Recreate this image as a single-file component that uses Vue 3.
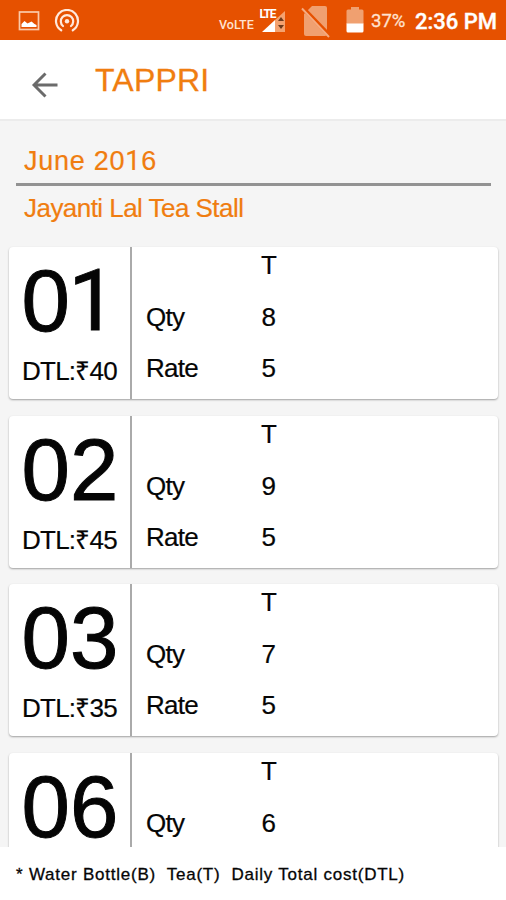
<script setup>
import { ref } from 'vue';

const entries = ref([
    { day: '01', total: 40, qty: 8, rate: 5 },
    { day: '02', total: 45, qty: 9, rate: 5 },
    { day: '03', total: 35, qty: 7, rate: 5 },
    { day: '06', total: 30, qty: 6, rate: 5 },
]);
</script>

<template>
    <div class="screen">
        <!-- Status bar -->
        <div class="status-bar">
            <svg class="icon-image" width="22" height="22" viewBox="0 0 22 22">
                <rect x="1.5" y="2" width="19" height="17.5" fill="none" stroke="#fbc9a8" stroke-width="1.7" />
                <path d="M3.500 17v-3l3-3 3 2.500 4-2 3 2.500 2 1v2z" fill="#fff" />
            </svg>
            <svg class="icon-cast" width="26" height="24" viewBox="0 0 26 24" fill="none" stroke="#ffe9dc"
                stroke-width="2.2" stroke-linecap="round">
                <path d="M7.2 21.3A11 11 0 1 1 18.8 21.3" />
                <path d="M9 17A6.2 6.2 0 1 1 17 17" />
                <circle cx="13" cy="12.3" r="2.2" fill="#ffe9dc" stroke="none" />
            </svg>
            <span class="volte">VoLTE</span>
            <div class="signal">
                <span class="lte">LTE</span>
                <svg width="26" height="24" viewBox="0 0 26 24">
                    <path d="M24 1v21H14V10z" fill="#f4a26f" />
                    <path d="M1 22 14 10v12z" fill="#fff" />
                    <path d="M17 11l3-4 3 4zM17 15l3 4 3-4z" fill="#6b3a1c" />
                </svg>
            </div>
            <svg class="icon-sim" width="32" height="34" viewBox="0 0 32 34">
                <path d="M11 2h13q2 0 2 2v26q0 2-2 2H5q-2 0-2-2V10z" fill="#f0a070" />
                <path d="M2 4 29 32" stroke="#e65100" stroke-width="4" />
                <path d="M1 4.5 28 33" stroke="#f5ab80" stroke-width="1.9" />
            </svg>
            <svg class="icon-battery" width="18" height="26" viewBox="0 0 18 26">
                <path d="M5 0h8v2.5h3q1.5 0 1.5 1.5V17H.5V4Q.5 2.5 2 2.5h3z" fill="#f0a070" />
                <path d="M.5 16.5h17V24q0 1.5-1.5 1.5H2Q.5 25.5.5 24z" fill="#fff" />
            </svg>
            <span class="percent">37%</span>
            <span class="clock">2:36 PM</span>
        </div>

        <!-- Toolbar -->
        <header class="toolbar">
            <svg class="back" width="28" height="28" viewBox="0 0 28 28" fill="none" stroke="#6b6b6b"
                stroke-width="2.9">
                <path d="M26.5 14H3M14.5 2.5 3 14l11.5 11.5" />
            </svg>
            <h1>TAPPRI</h1>
        </header>

        <main class="content">
            <div class="month">June 20<span class="one">1</span>6</div>
            <div class="shop">Jayanti Lal Tea Stall</div>

            <div class="list">
                <div v-for="entry in entries" :key="entry.day" class="card">
                    <div class="date">
                        <div class="day">
                            <span v-for="(digit, i) in entry.day" :key="i" :class="{ one: digit === '1' }">{{ digit }}</span>
                        </div>
                        <div class="dtl">DTL:₹{{ entry.total }}</div>
                    </div>
                    <div class="details">
                        <span></span><span class="value">T</span>
                        <span>Qty</span><span class="value">{{ entry.qty }}</span>
                        <span>Rate</span><span class="value">{{ entry.rate }}</span>
                    </div>
                </div>
            </div>
        </main>

        <footer class="legend">* Water Bottle(B)&nbsp; Tea(T)&nbsp; Daily Total cost(DTL)</footer>
    </div>
</template>

<style>
body {
    margin: 0;
    overflow: hidden;
}
</style>

<style scoped>
.screen {
    display: flex;
    flex-direction: column;
    width: 506px;
    height: 900px;
    overflow: hidden;
    background: #f5f5f5;
    color: #050505;
    font-family: "Liberation Sans", Arial, sans-serif;
    white-space: nowrap;
}

.status-bar {
    display: flex;
    flex: none;
    align-items: flex-start;
    box-sizing: border-box;
    height: 40px;
    background: #e65100;
    color: #fff;
    font-family: Roboto, sans-serif;
}

.icon-image {
    margin: 10px 0 0 18px;
}

.icon-cast {
    margin: 9px 0 0 14px;
}

.volte {
    width: 37px;
    margin: 16px 0 0 139px;
    color: #ffe2d0;
    font-size: 12.5px;
    font-weight: 500;
    line-height: 18px;
}

.signal {
    position: relative;
    width: 26px;
    margin: 10px 0 0 5px;
}

.lte {
    position: absolute;
    top: -2px;
    left: -1.5px;
    font-size: 12px;
    font-weight: 700;
    line-height: 12px;
    letter-spacing: -1.2px;
}

.icon-sim {
    margin: 4px 0 0 14px;
}

.icon-battery {
    margin: 7px 0 0 13px;
}

.percent {
    width: 36px;
    margin: 10px 0 0 7px;
    color: #ffe2d0;
    font-size: 18.5px;
    line-height: 23px;
    -webkit-text-stroke: 0.3px #ffe2d0;
}

.clock {
    margin: 9px 0 0 8px;
    font-size: 22px;
    font-weight: 500;
    line-height: 25px;
    -webkit-text-stroke: 0.4px #fff;
}

.toolbar {
    display: flex;
    flex: none;
    align-items: flex-start;
    box-sizing: border-box;
    height: 81px;
    border-bottom: 2px solid #ececec;
    background: #fff;
}

.back {
    margin: 31px 0 0 31px;
}

h1 {
    margin: 22px 0 0 36px;
    color: #f07d10;
    font-size: 32px;
    font-weight: 400;
    line-height: 36px;
    letter-spacing: 0.2px;
    -webkit-text-stroke: 0.3px #f07d10;
}

.content {
    flex: 1;
    min-height: 0;
    overflow: hidden;
}

.month {
    box-sizing: border-box;
    height: 65px;
    margin: 0 15px 0 16px;
    padding: 24px 0 0 8px;
    border-bottom: 3px solid #929292;
    color: #f07d10;
    font-size: 27px;
    line-height: 32px;
    letter-spacing: 0.75px;
    -webkit-text-stroke: 0.2px #f07d10;
}

.one {
    font-family: Roboto, "Liberation Sans", sans-serif;
}

.shop {
    height: 61px;
    padding: 7px 0 0 24px;
    box-sizing: border-box;
    color: #f07d10;
    font-size: 26px;
    line-height: 30px;
    letter-spacing: -0.54px;
    -webkit-text-stroke: 0.2px #f07d10;
}

.list {
    display: flex;
    flex-direction: column;
    gap: 16.7px;
    padding: 0 8px 0 9px;
}

.card {
    display: flex;
    flex: none;
    height: 152px;
    border-radius: 4px;
    background: #fff;
    box-shadow: 0 1px 2px rgba(0, 0, 0, 0.35);
}

.date {
    box-sizing: border-box;
    width: 123px;
    border-right: 2px solid #aaa;
}

.day {
    display: flex;
    height: 98px;
    padding-left: 12.5px;
    font-size: 87px;
    line-height: 108px;
    -webkit-text-stroke: 1px #050505;
}

.day .one {
    margin-left: -1.5px;
    font-size: 86px;
}

.dtl {
    padding-left: 13px;
    font-size: 26px;
    line-height: 52px;
    letter-spacing: -0.75px;
    -webkit-text-stroke: 0.2px #050505;
}

.details {
    display: grid;
    grid-template-columns: 110px 40px;
    grid-template-rows: 44px 51px 51px;
    padding-left: 14px;
    font-size: 26px;
    line-height: 52px;
    letter-spacing: -0.7px;
    -webkit-text-stroke: 0.2px #050505;
}

.details span:nth-child(-n + 2) {
    line-height: 37px;
}

.value {
    width: 25px;
    text-align: center;
}

.legend {
    box-sizing: border-box;
    flex: none;
    height: 53px;
    padding: 15px 0 0 16px;
    background: #fff;
    font-size: 17px;
    line-height: 25px;
    letter-spacing: 0.77px;
    -webkit-text-stroke: 0.3px #050505;
}
</style>
